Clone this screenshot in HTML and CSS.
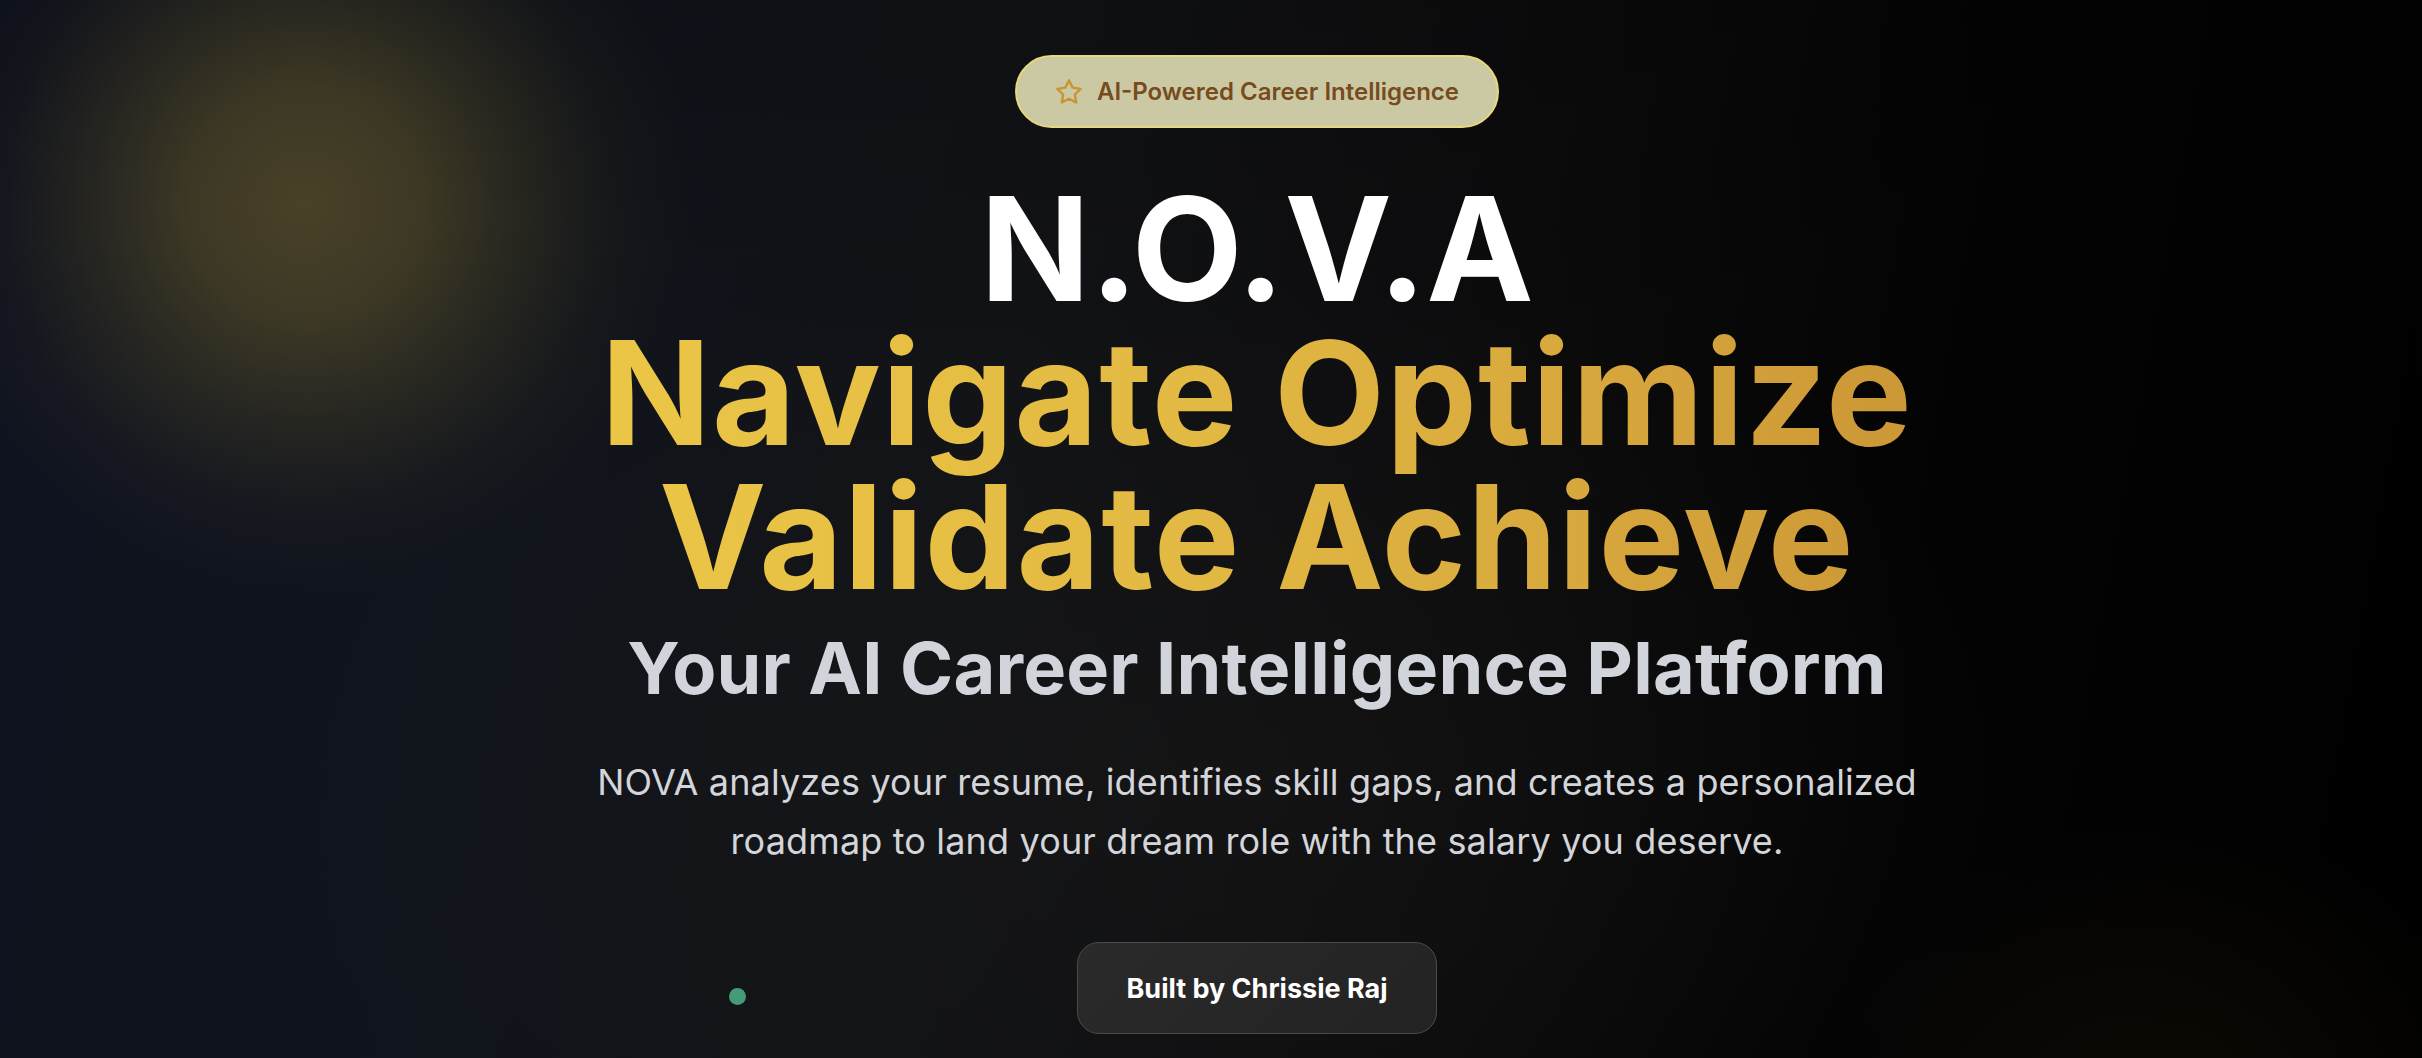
FILE: index.html
```html
<!DOCTYPE html>
<html lang="en">
<head>
<meta charset="utf-8">
<title>NOVA — AI Career Intelligence</title>
<link rel="stylesheet" href="styles.css">
</head>
<body>
<main class="hero">
  <div class="glow glow-left"></div>
  <div class="glow glow-right"></div>
  <span class="dot"></span>
  <div class="content">
    <div class="badge">
      <svg class="badge-icon" viewBox="0 0 24 24" fill="none" stroke="currentColor" stroke-width="2" stroke-linecap="round" stroke-linejoin="round"><path d="M12 2l3.09 6.26L22 9.27l-5 4.87 1.18 6.88L12 17.77l-6.18 3.25L7 14.14 2 9.27l6.91-1.01L12 2z"/></svg>
      <span>AI-Powered Career Intelligence</span>
    </div>
    <h1 class="title">
      <span class="title-main">N.O.V.A</span>
      <span class="title-gold">Navigate Optimize<br>Validate Achieve</span>
    </h1>
    <h2 class="subtitle">Your AI Career Intelligence Platform</h2>
    <p class="lead">NOVA analyzes your resume, identifies skill gaps, and creates a personalized roadmap to land your dream role with the salary you deserve.</p>
    <button class="credit" type="button">Built by Chrissie Raj</button>
  </div>
</main>
</body>
</html>
```

FILE: styles.css
```css
* { box-sizing: border-box; }
html, body { margin: 0; padding: 0; }
body {
  font-family: Inter, "Noto Sans", "Liberation Sans", sans-serif;
  background: #000;
  overflow: hidden;
}
.hero {
  position: relative;
  width: 100%;
  height: 1058px;
  overflow: hidden;
  padding: 55px 0 0 92px;
  background:
    radial-gradient(ellipse 900px 500px at 1150px 780px, rgba(24,24,24,0.55), rgba(24,24,24,0) 100%),
    linear-gradient(180deg, rgba(0,0,0,0.18) 0%, rgba(0,0,0,0) 40%),
    linear-gradient(100deg, #0f1320 0%, #10141c 22%, #121316 42%, #0b0b0c 62%, #030304 78%, #000 100%);
}
.glow {
  position: absolute;
  border-radius: 50%;
  pointer-events: none;
}
.glow-left {
  left: -84px;
  top: -187px;
  width: 780px;
  height: 780px;
  background: radial-gradient(circle closest-side, rgba(120,105,50,0.55) 0%, rgba(115,100,48,0.46) 30%, rgba(100,88,44,0.28) 55%, rgba(80,70,40,0.1) 78%, rgba(80,70,40,0) 100%);
}
.glow-right {
  left: 1800px;
  top: 820px;
  width: 720px;
  height: 620px;
  background: radial-gradient(closest-side, rgba(90,70,20,0.14), rgba(90,70,20,0) 100%);
}
.dot {
  position: absolute;
  left: 729px;
  top: 988px;
  width: 17px;
  height: 17px;
  border-radius: 50%;
  background: #479a78;
}
.content {
  position: relative;
  display: flex;
  flex-direction: column;
  align-items: center;
  text-align: center;
}
.badge {
  display: flex;
  align-items: center;
  gap: 14px;
  height: 73px;
  padding: 0 38px;
  border-radius: 999px;
  background: #cbc9a3;
  border: 2px solid #e8d77c;
  color: #774b1e;
  font-size: 24px;
  font-weight: 600;
}
.badge-icon {
  width: 28px;
  height: 28px;
  color: #c99331;
  flex: none;
}
.title {
  margin: 49px 0 0;
  display: flex;
  flex-direction: column;
  align-items: center;
  font-size: 144px;
  line-height: 144px;
  font-weight: 700;
}
.title-main {
  color: #ffffff;
  letter-spacing: 0;
}
.title-gold {
  display: inline-block;
  letter-spacing: 1.2px;
  background: linear-gradient(90deg, #ebc646 0%, #e2b943 45%, #d9ab3e 70%, #cc9736 100%);
  -webkit-background-clip: text;
  background-clip: text;
  color: transparent;
}
.subtitle {
  margin: 16px 0 0;
  font-size: 72px;
  line-height: 86px;
  font-weight: 700;
  color: #d1d4da;
  letter-spacing: 0.2px;
}
.lead {
  margin: 42px 0 0;
  max-width: 1400px;
  font-size: 36px;
  line-height: 58.5px;
  font-weight: 400;
  color: #d4d5da;
  letter-spacing: 0.15px;
}
.credit {
  margin-top: 72px;
  width: 360px;
  height: 92px;
  border-radius: 22px;
  border: 1px solid #4a4a4c;
  background: linear-gradient(135deg, #2a2a2b, #232324);
  color: #ffffff;
  font-family: inherit;
  font-size: 27px;
  font-weight: 700;
}
```
